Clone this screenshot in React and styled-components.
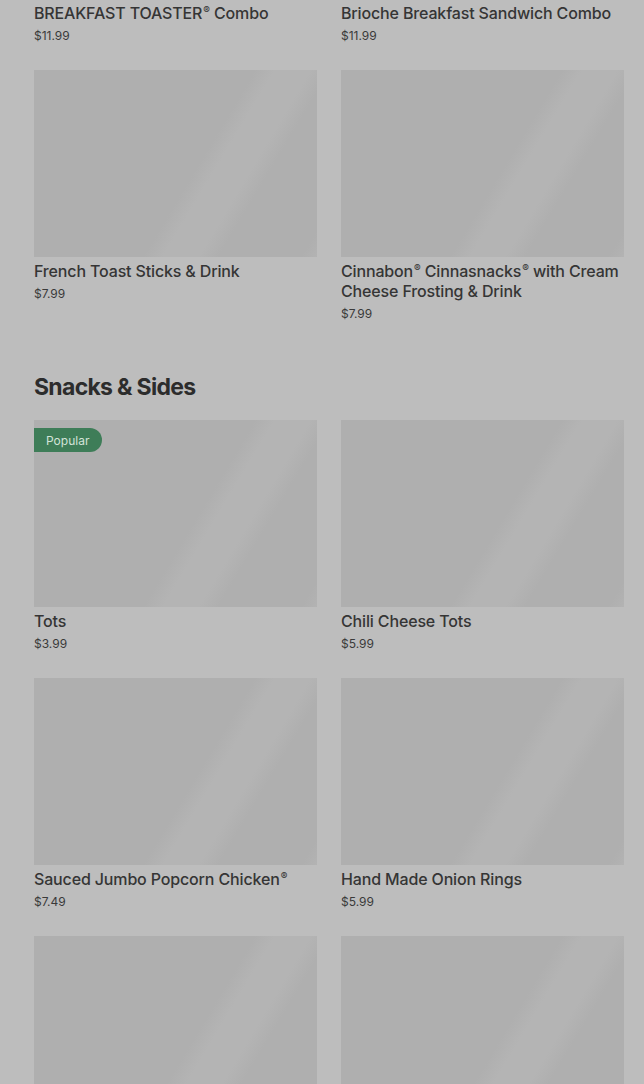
import React from "react";
import styled, { createGlobalStyle } from "styled-components";

const GlobalStyle = createGlobalStyle`
	html, body {
		margin: 0;
		padding: 0;
		background: #bdbdbd;
		overflow: hidden;
	}
	body {
		font-family: Inter, "Noto Sans", "Liberation Sans", sans-serif;
		color: #333333;
	}
`;

const Page = styled.div`
	height: 1084px;
	overflow: hidden;
	padding: 0 20px 0 34px;
`;

// list is scrolled so that the first row's pictures sit above the fold
const Menu = styled.div`
	margin-top: -188px;
`;

const Section = styled.section`
	& + & {
		margin-top: 48px;
	}
`;

const SectionTitle = styled.h2`
	margin: 0 0 18px 0;
	font-size: 23px;
	line-height: 30px;
	font-weight: 700;
	letter-spacing: -0.7px;
	color: #2c2c2c;
`;

const Grid = styled.div`
	display: grid;
	grid-template-columns: 283px 283px;
	column-gap: 24px;
	row-gap: 24px;
	align-items: start;
`;

const Card = styled.div`
	display: flex;
	flex-direction: column;
`;

const Picture = styled.div`
	position: relative;
	height: 187px;
	background: linear-gradient(
		121deg,
		#afafaf 0%,
		#afafaf 56%,
		#b4b4b4 61%,
		#b4b4b4 70%,
		#afafaf 75%,
		#afafaf 96%,
		#b3b3b3 100%
	);
`;

const Badge = styled.span`
	position: absolute;
	top: 8px;
	left: 0;
	height: 24px;
	padding: 0 13px 0 12px;
	display: flex;
	align-items: center;
	background: #3e7d58;
	color: #d3e3d8;
	font-size: 12px;
	border-radius: 0 12px 12px 0;
`;

const Name = styled.div`
	margin-top: 4px;
	font-size: 16px;
	line-height: 20px;
	font-weight: 500;
	color: #353535;
	letter-spacing: -0.15px;
`;

const Reg = styled.span`
	display: inline-block;
	font-size: 10px;
	line-height: 10px;
	vertical-align: 5px;
	margin-left: 1px;
`;

const Price = styled.div`
	margin-top: 3px;
	font-size: 12px;
	line-height: 20px;
	color: #3a3a3a;
`;

const breakfast = [
	{ name: "BREAKFAST TOASTER® Combo", price: "$11.99" },
	{ name: "Brioche Breakfast Sandwich Combo", price: "$11.99" },
	{ name: "French Toast Sticks & Drink", price: "$7.99" },
	{ name: "Cinnabon® Cinnasnacks® with Cream Cheese Frosting & Drink", price: "$7.99" },
];

const snacks = [
	{ name: "Tots", price: "$3.99", badge: "Popular" },
	{ name: "Chili Cheese Tots", price: "$5.99" },
	{ name: "Sauced Jumbo Popcorn Chicken®", price: "$7.49" },
	{ name: "Hand Made Onion Rings", price: "$5.99" },
	{},
	{},
];

// render the ® mark small and raised, as the menu does
const withMarks = (text) =>
	text.split("®").map((part, i, all) => (
		<React.Fragment key={i}>
			{part}
			{i < all.length - 1 && <Reg>®</Reg>}
		</React.Fragment>
	));

const Item = ({ item }) => (
	<Card>
		<Picture>{item.badge && <Badge>{item.badge}</Badge>}</Picture>
		{item.name && <Name>{withMarks(item.name)}</Name>}
		{item.price && <Price>{item.price}</Price>}
	</Card>
);

const App = () => {
	return (
		<Page>
			<GlobalStyle />
			<Menu>
				<Section>
					<Grid>
						{breakfast.map((item, i) => (
							<Item key={i} item={item} />
						))}
					</Grid>
				</Section>
				<Section>
					<SectionTitle>Snacks &amp; Sides</SectionTitle>
					<Grid>
						{snacks.map((item, i) => (
							<Item key={i} item={item} />
						))}
					</Grid>
				</Section>
			</Menu>
		</Page>
	);
};

export default App;
